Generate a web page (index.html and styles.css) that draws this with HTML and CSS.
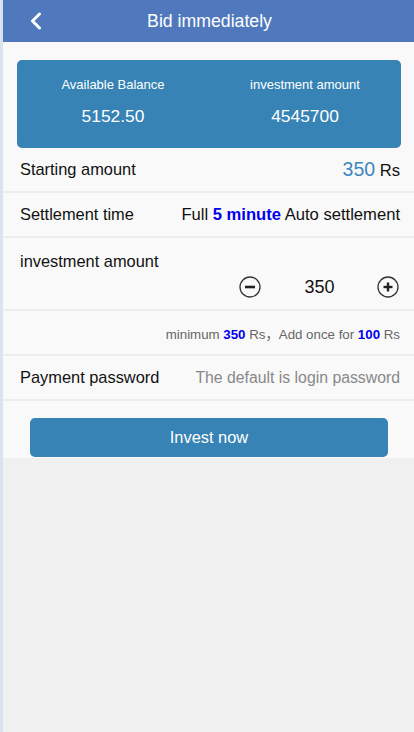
FILE: index.html
```html
<!DOCTYPE html>
<html>
<head>
<meta charset="utf-8">
<link rel="stylesheet" href="styles.css">
</head>
<body>
<div class="page">
  <header class="topbar">
    <span class="back">
      <svg width="14" height="18" viewBox="0 0 14 18"><path d="M10.5 2 L3.5 9 L10.5 16" fill="none" stroke="#fff" stroke-width="3" stroke-linecap="round" stroke-linejoin="round"/></svg>
    </span>
    <h1 class="title">Bid immediately</h1>
  </header>
  <main class="main">
    <section class="card">
      <div class="stat">
        <div class="stat-label">Available Balance</div>
        <div class="stat-value">5152.50</div>
      </div>
      <div class="stat">
        <div class="stat-label">investment amount</div>
        <div class="stat-value">4545700</div>
      </div>
    </section>
    <div class="row">
      <span class="label">Starting amount</span>
      <span class="value"><span class="big-blue">350</span> Rs</span>
    </div>
    <div class="row">
      <span class="label">Settlement time</span>
      <span class="value">Full <b class="hl">5 minute</b> Auto settlement</span>
    </div>
    <div class="row row-invest">
      <span class="label">investment amount</span>
      <div class="stepper">
        <span class="circ">
          <svg width="22" height="22" viewBox="0 0 22 22"><circle cx="11" cy="11" r="10" fill="none" stroke="#333" stroke-width="1.3"/><rect x="6" y="9.7" width="10" height="2.6" fill="#222"/></svg>
        </span>
        <span class="qty">350</span>
        <span class="circ">
          <svg width="22" height="22" viewBox="0 0 22 22"><circle cx="11" cy="11" r="10" fill="none" stroke="#333" stroke-width="1.3"/><rect x="6.5" y="9.8" width="9" height="2.4" fill="#222"/><rect x="9.8" y="6.5" width="2.4" height="9" fill="#222"/></svg>
        </span>
      </div>
    </div>
    <div class="row row-note">
      <span class="note">minimum <b class="hl">350</b> Rs，Add once for <b class="hl">100</b> Rs</span>
    </div>
    <div class="row">
      <span class="label">Payment password</span>
      <span class="placeholder">The default is login password</span>
    </div>
    <div class="btn-wrap">
      <button class="btn">Invest now</button>
    </div>
  </main>
</div>
</body>
</html>
```
FILE: styles.css
```css
* { box-sizing: border-box; }
html, body { margin: 0; padding: 0; }
body {
  font-family: "Liberation Sans", Arial, "Noto Sans CJK SC", sans-serif;
  background: #f0f0f0;
  color: #111;
}
.page {
  min-height: 732px;
  border-left: 3px solid #dde3ec;
  background: #f0f0f0;
}
.topbar {
  height: 42px;
  background: #5079bd;
  display: flex;
  align-items: center;
  justify-content: center;
  position: relative;
}
.back {
  position: absolute;
  left: 26px;
  top: 12px;
  display: flex;
}
.title {
  margin: 0;
  color: #fff;
  font-size: 17.7px;
  font-weight: normal;
  padding-left: 2px;
}
.main {
  background: #f9f9f9;
  padding-top: 18px;
}
.card {
  margin: 0 13px 0 14px;
  height: 88px;
  background: #3783b5;
  border-radius: 5px;
  display: flex;
  color: #fff;
}
.stat {
  flex: 1;
  display: flex;
  flex-direction: column;
  align-items: center;
  padding-top: 17px;
}
.stat-label {
  font-size: 13px;
  line-height: 15px;
}
.stat-value {
  font-size: 17.4px;
  line-height: 20px;
  margin-top: 14px;
}
.row {
  height: 45px;
  border-bottom: 2px solid #ededed;
  display: flex;
  align-items: center;
  justify-content: space-between;
  padding: 0 14px 0 17px;
  font-size: 16.4px;
}
.label { color: #111; }
.value { color: #111; font-size: 16.6px; }
.big-blue {
  color: #3d87bf;
  font-size: 19.5px;
}
.hl {
  color: #0000ee;
  font-weight: bold;
}
.row-invest {
  height: 73px;
  flex-direction: column;
  align-items: stretch;
  justify-content: flex-start;
  padding-top: 13px;
}
.row-invest .label { line-height: 20px; }
.stepper {
  display: flex;
  align-items: center;
  justify-content: flex-end;
  margin-top: 4px;
  height: 24px;
  padding-right: 1px;
}
.circ { display: flex; }
.qty {
  width: 116px;
  text-align: center;
  font-size: 18px;
  color: #111;
  padding-left: 1px;
}
.row-note {
  justify-content: flex-end;
  padding-top: 1px;
}
.note {
  font-size: 13.3px;
  color: #666;
}
.placeholder {
  color: #888;
  font-size: 15.8px;
}
.btn-wrap {
  padding: 17px 26px 1px 27px;
}
.btn {
  display: block;
  width: 100%;
  height: 39px;
  border: none;
  border-radius: 5px;
  background: #3783b5;
  color: #fff;
  font-family: "Liberation Sans", Arial, sans-serif;
  font-size: 16.4px;
  padding: 0;
}
```
